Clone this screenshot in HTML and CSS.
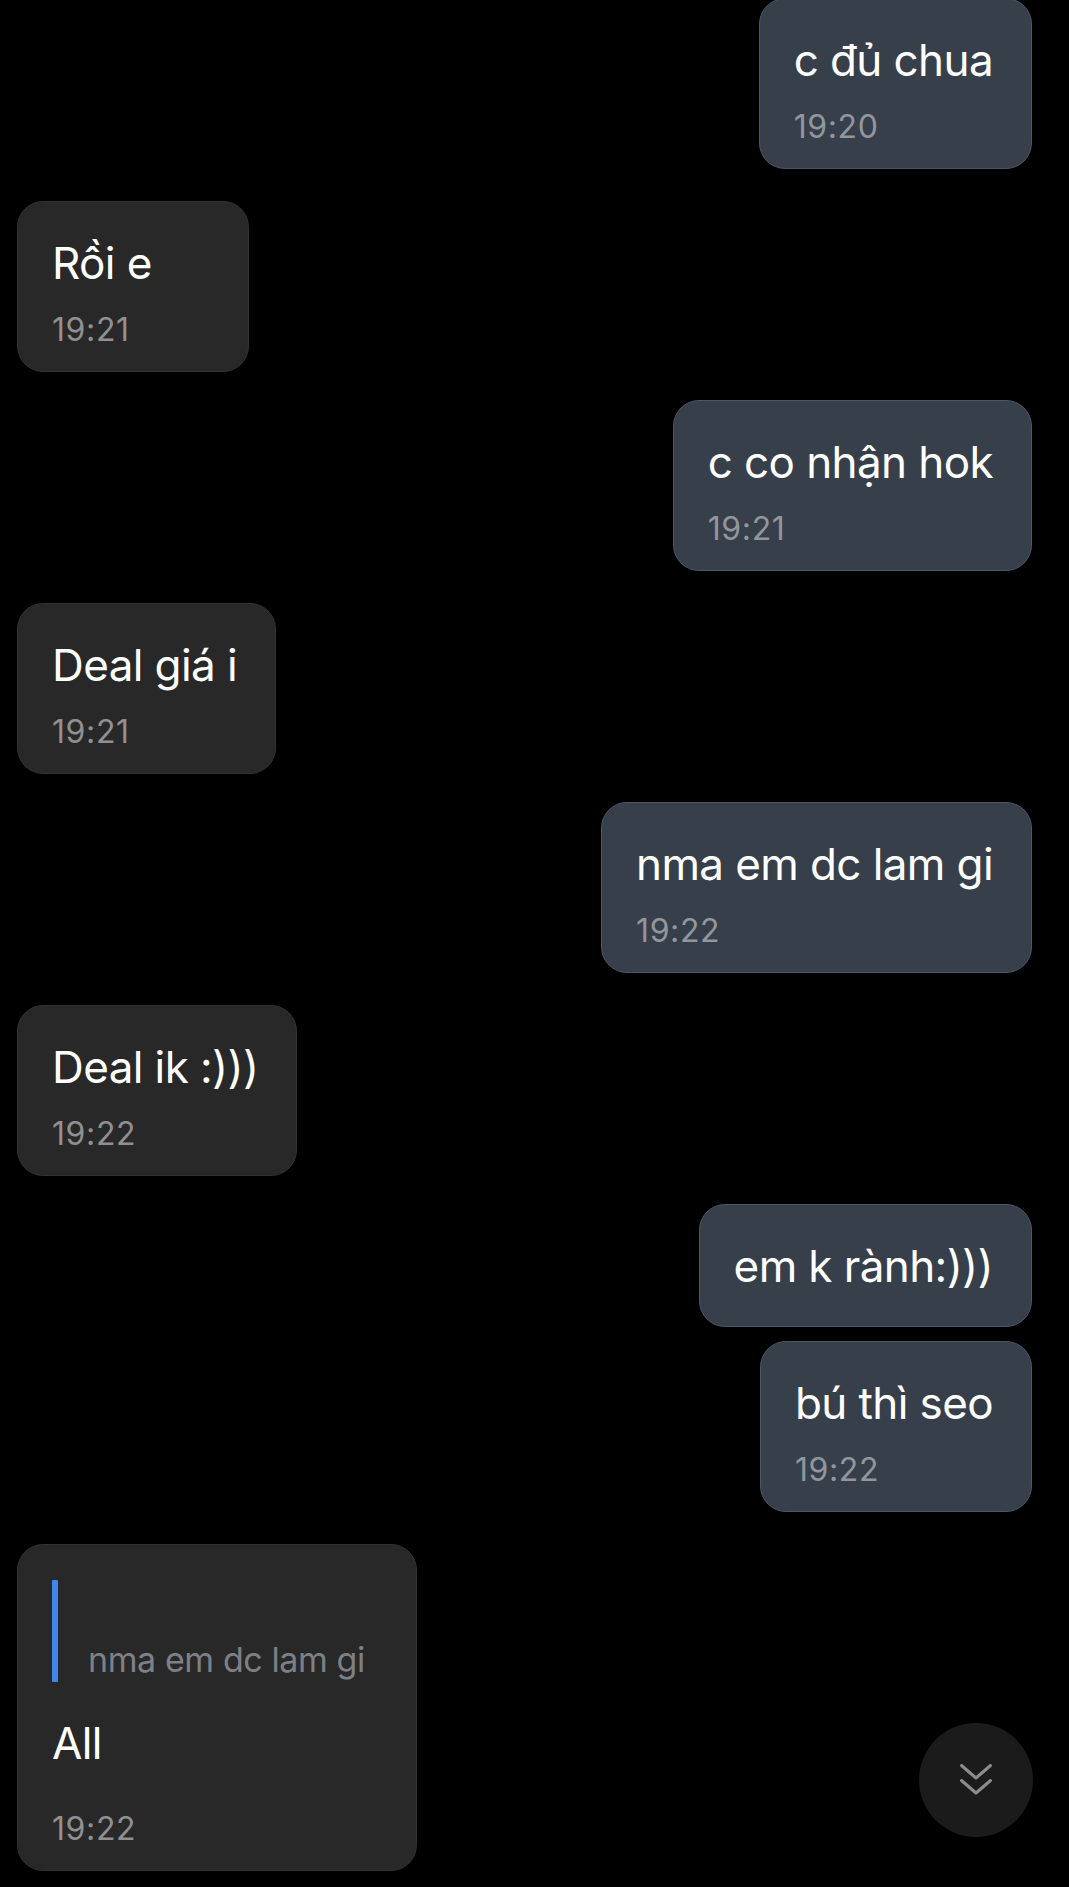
FILE: index.html
```html
<!DOCTYPE html>
<html lang="vi">
<head>
<meta charset="utf-8">
<title>Chat</title>
<link rel="stylesheet" href="styles.css">
</head>
<body>
<main class="chat">
  <div class="msg out">
    <div class="text">c đủ chua</div>
    <div class="time">19:20</div>
  </div>
  <div class="msg in">
    <div class="text">Rồi e</div>
    <div class="time">19:21</div>
  </div>
  <div class="msg out">
    <div class="text">c co nhận hok</div>
    <div class="time">19:21</div>
  </div>
  <div class="msg in">
    <div class="text">Deal giá i</div>
    <div class="time">19:21</div>
  </div>
  <div class="msg out">
    <div class="text">nma em dc lam gi</div>
    <div class="time">19:22</div>
  </div>
  <div class="msg in">
    <div class="text">Deal ik :)))</div>
    <div class="time">19:22</div>
  </div>
  <div class="msg out notime">
    <div class="text">em k rành:)))</div>
  </div>
  <div class="msg out">
    <div class="text">bú thì seo</div>
    <div class="time">19:22</div>
  </div>
  <div class="msg in reply">
    <div class="quote">
      <span class="quote-bar"></span>
      <span class="quote-text">nma em dc lam gi</span>
    </div>
    <div class="text">All</div>
    <div class="time">19:22</div>
  </div>
</main>
<button class="scroll-down" aria-label="Cuộn xuống">
  <svg width="34" height="34" viewBox="0 0 34 34" fill="none" stroke="#8c8c8e" stroke-width="3" stroke-linecap="round" stroke-linejoin="round">
    <path d="M2.5 2.5 L17 15 L31.5 2.5"/>
    <path d="M2.5 17.5 L17 30 L31.5 17.5"/>
  </svg>
</button>
</body>
</html>
```
FILE: styles.css
```css
html, body {
  margin: 0;
  padding: 0;
  background: #000;
}

body {
  position: relative;
  min-height: 1887px;
  overflow: hidden;
  font-family: Inter, "Noto Sans", "Liberation Sans", sans-serif;
}

.chat {
  display: flex;
  flex-direction: column;
  padding: 0 37px 14px 17px;
  margin-top: -2px;
}

.msg {
  box-sizing: border-box;
  min-width: 232px;
  padding: 35px 38px 21px 34px;
  border-radius: 26px;
  border: 1px solid;
}

.msg.in {
  align-self: flex-start;
  background: #282828;
  border-color: #323232;
}

.msg.out {
  align-self: flex-end;
  background: #373f4b;
  border-color: #4e5666;
}

.out + .in { margin-top: 32px; }
.in + .out { margin-top: 28px; }
.out + .out { margin-top: 14px; }

.text {
  color: #fff;
  font-size: 44px;
  line-height: 52px;
  letter-spacing: -0.6px;
  white-space: nowrap;
}

.time {
  margin-top: 21px;
  font-size: 32px;
  line-height: 40px;
  letter-spacing: 0.6px;
  color: #909093;
}

.out .time {
  color: #92969e;
}

.msg.notime {
  padding-bottom: 34px;
}

.reply {
  width: 400px;
}

.quote {
  display: flex;
  align-items: flex-end;
  height: 102px;
  margin-bottom: 35px;
}

.quote-bar {
  align-self: stretch;
  width: 6px;
  background: #3f87ef;
  border-radius: 1px;
}

.quote-text {
  margin-left: 30px;
  padding-bottom: 2px;
  font-size: 34px;
  line-height: 40px;
  letter-spacing: -0.4px;
  color: #7e8085;
  white-space: nowrap;
}

.reply .time {
  margin-top: 40px;
}

.scroll-down {
  position: absolute;
  right: 36px;
  bottom: 50px;
  width: 114px;
  height: 114px;
  border: none;
  border-radius: 50%;
  background: #1b1b1c;
  display: flex;
  align-items: center;
  justify-content: center;
  padding: 0;
}
```
